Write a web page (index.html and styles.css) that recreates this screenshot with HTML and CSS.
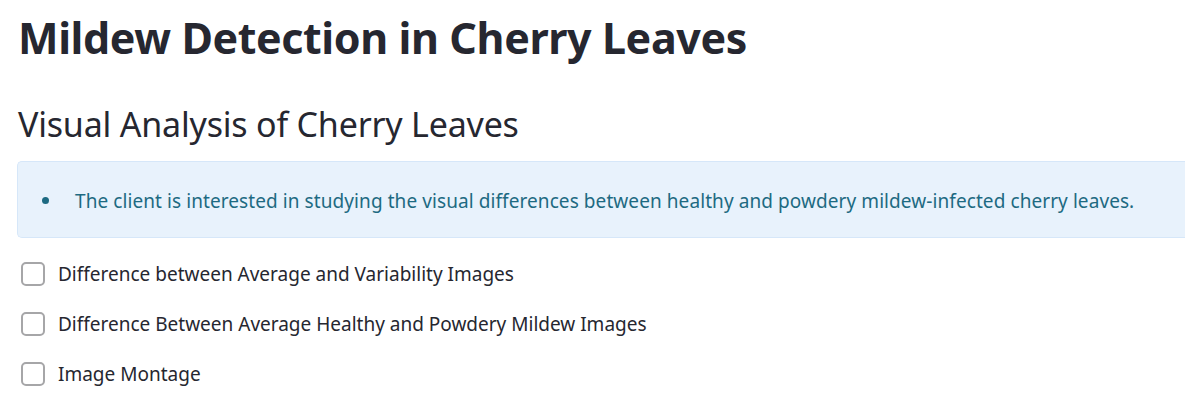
FILE: index.html
```html
<!DOCTYPE html>
<html lang="en">
<head>
<meta charset="utf-8">
<title>Mildew Detection in Cherry Leaves</title>
<link rel="stylesheet" href="styles.css">
</head>
<body>
<main class="page">
  <h1 class="title">Mildew Detection in Cherry Leaves</h1>
  <h2 class="subtitle">Visual Analysis of Cherry Leaves</h2>
  <div class="info">
    <ul class="info-list">
      <li class="info-item">The client is interested in studying the visual differences between healthy and powdery mildew-infected cherry leaves.</li>
    </ul>
  </div>
  <div class="checks">
    <label class="check"><span class="box"></span><span class="label">Difference between Average and Variability Images</span></label>
    <label class="check"><span class="box"></span><span class="label">Difference Between Average Healthy and Powdery Mildew Images</span></label>
    <label class="check"><span class="box"></span><span class="label">Image Montage</span></label>
  </div>
</main>
</body>
</html>
```

FILE: styles.css
```css
html, body {
  margin: 0;
  padding: 0;
  background: #ffffff;
}
body {
  font-family: "Noto Sans", "Open Sans", sans-serif;
  color: #262730;
  overflow: hidden;
}
.page {
  display: flex;
  flex-direction: column;
  padding: 10px 0 0 18px;
}
.title {
  margin: 0;
  font-size: 43px;
  font-weight: 700;
  letter-spacing: -0.4px;
  line-height: 56px;
  color: #262730;
}
.subtitle {
  margin: 36px 0 0 0;
  font-size: 34px;
  font-weight: 400;
  letter-spacing: -0.2px;
  line-height: 44px;
  color: #262730;
}
.info {
  margin: 15px 0 0 -1px;
  height: 75px;
  background: #e8f2fc;
  border: 1px solid #d6e7f9;
  border-right: none;
  border-radius: 5px 0 0 5px;
  display: flex;
  align-items: center;
  color: #1d6a82;
}
.info-list {
  margin: 0;
  padding: 2px 0 0 24px;
  list-style: none;
  font-size: 19px;
  letter-spacing: 0.08px;
  line-height: 28px;
}
.info-item {
  display: flex;
  align-items: center;
  gap: 26px;
}
.info-item::before {
  content: "";
  width: 7px;
  height: 7px;
  border-radius: 50%;
  background: #1d6a82;
  flex: none;
}
.checks {
  display: flex;
  flex-direction: column;
  gap: 26px;
  margin-top: 24px;
}
.check {
  display: flex;
  align-items: center;
  gap: 13px;
  height: 24px;
}
.box {
  box-sizing: border-box;
  width: 24px;
  height: 24px;
  margin-left: 3px;
  border: 2px solid #a6a6a8;
  border-radius: 5px;
  flex: none;
}
.label {
  font-size: 19px;
  line-height: 24px;
  color: #262730;
}
```
